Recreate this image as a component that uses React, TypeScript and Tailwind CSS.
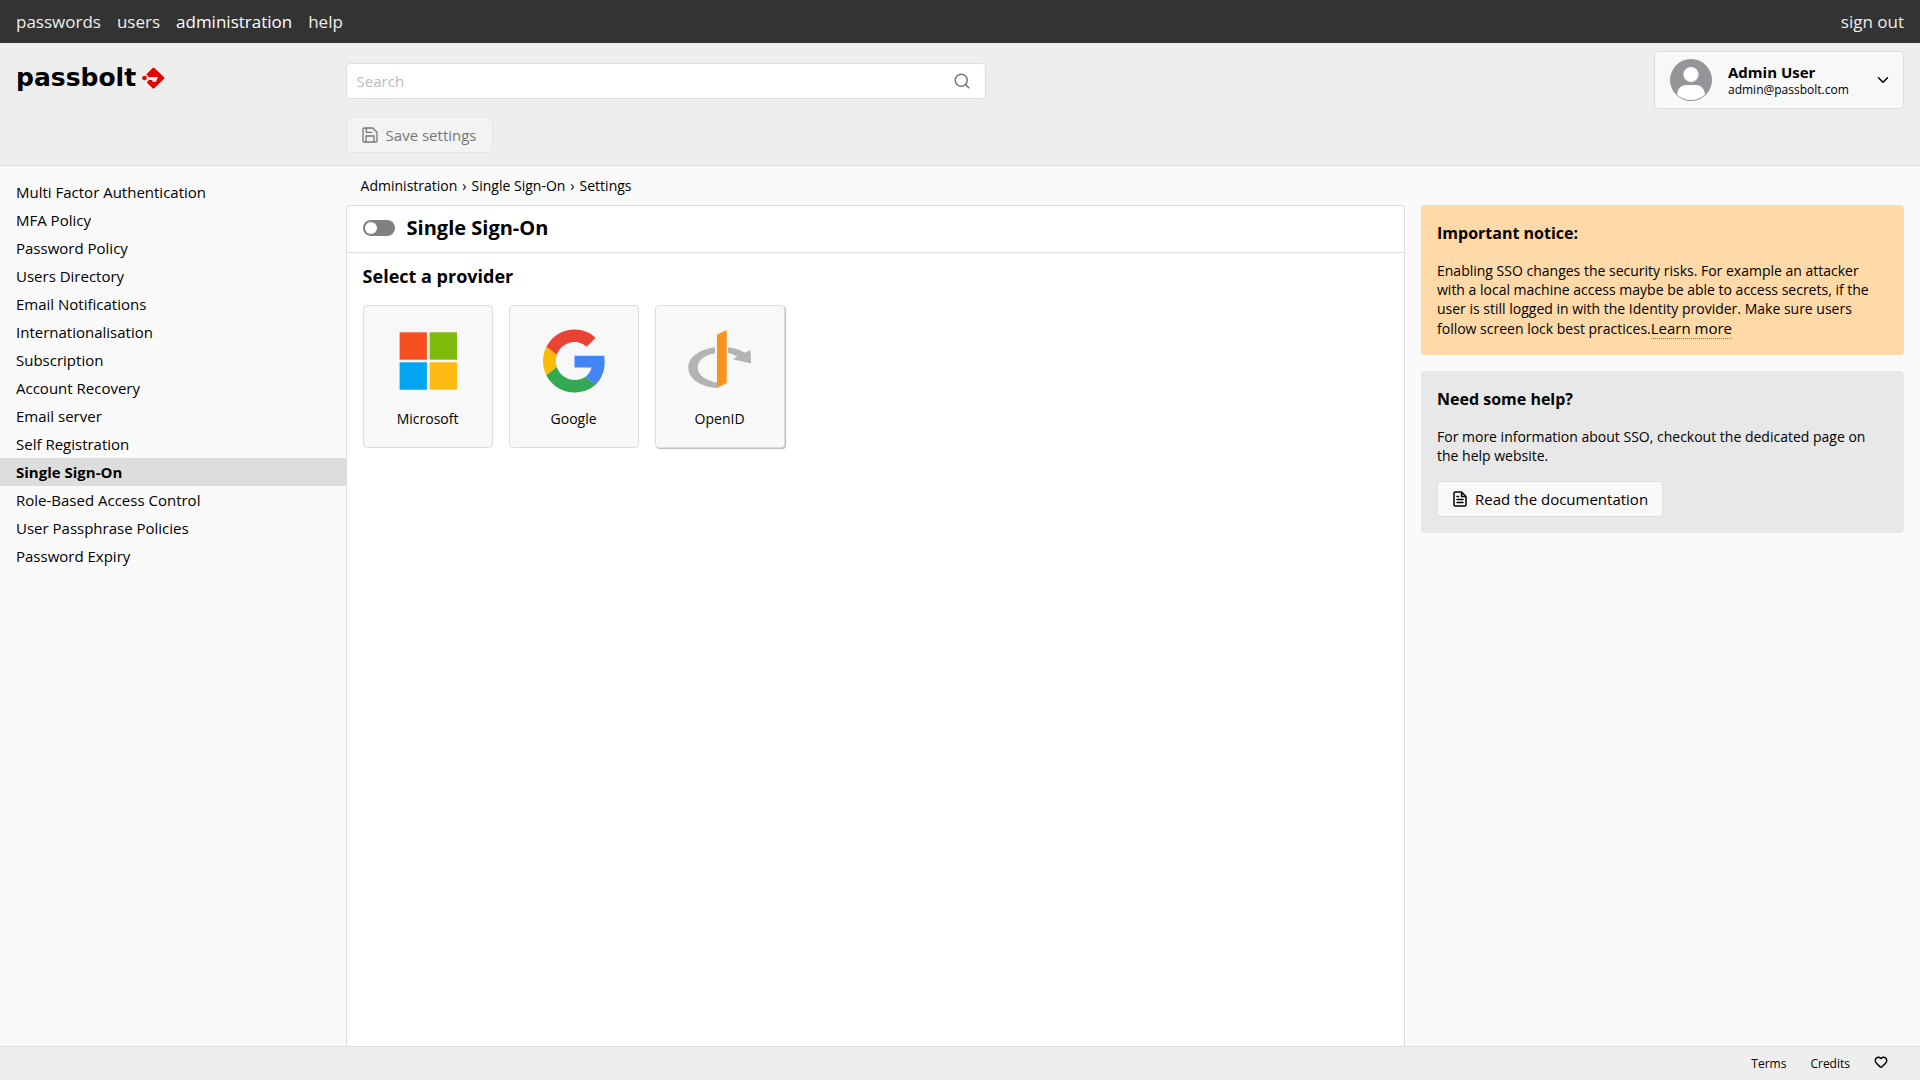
import type { ReactNode } from "react";
import { ChevronDown, Heart, Search } from "lucide-react";

interface Provider {
  name: string;
  logo: ReactNode;
  highlighted?: boolean;
}

const mainMenu = ["passwords", "users", "administration", "help"];

const settingsMenu = [
  "Multi Factor Authentication",
  "MFA Policy",
  "Password Policy",
  "Users Directory",
  "Email Notifications",
  "Internationalisation",
  "Subscription",
  "Account Recovery",
  "Email server",
  "Self Registration",
  "Single Sign-On",
  "Role-Based Access Control",
  "User Passphrase Policies",
  "Password Expiry",
];

const breadcrumbs = ["Administration", "Single Sign-On", "Settings"];

function MicrosoftLogo() {
  return (
    <svg viewBox="0 0 58 58" className="w-[58px] h-[58px]" aria-hidden="true">
      <path fill="#f65020" d="M.6.300h27.300v27.400H.6z" />
      <path fill="#80bb0c" d="M30.600.300H58v27.400H30.600z" />
      <path fill="#02a5f2" d="M.6 30.300h27.300v27.400H.6z" />
      <path fill="#ffb913" d="M30.600 30.300H58v27.400H30.600z" />
    </svg>
  );
}

function GoogleLogo() {
  return (
    <svg viewBox="0 0 48 48" className="w-16 h-16 pl-px" aria-hidden="true">
      <path fill="#EA4335" d="M24 9.5c3.54 0 6.71 1.22 9.21 3.6l6.85-6.85C35.9 2.38 30.47 0 24 0 14.62 0 6.51 5.38 2.56 13.22l7.98 6.19C12.43 13.72 17.74 9.5 24 9.5z" />
      <path fill="#4285F4" d="M46.98 24.55c0-1.57-.15-3.09-.38-4.55H24v9.02h12.94c-.58 2.96-2.26 5.48-4.78 7.18l7.73 6c4.51-4.18 7.09-10.36 7.09-17.65z" />
      <path fill="#FBBC05" d="M10.53 28.59c-.48-1.45-.76-2.99-.76-4.59s.27-3.14.76-4.59l-7.98-6.19C.92 16.46 0 20.12 0 24c0 3.88.92 7.54 2.56 10.78l7.97-6.19z" />
      <path fill="#34A853" d="M24 48c6.48 0 11.93-2.13 15.89-5.81l-7.73-6c-2.15 1.45-4.92 2.3-8.16 2.3-6.26 0-11.57-4.22-13.47-9.91l-7.98 6.19C6.51 42.62 14.62 48 24 48z" />
    </svg>
  );
}

function OpenIdLogo() {
  return (
    <svg viewBox="0 0 64 62" className="w-16 h-[62px]" aria-hidden="true">
      <path fill="#b3b3b3" d="M27 17.500C12 19 .3 27 .3 37.700.3 48.500 12.500 57 29 58v-5.600C18 50.800 9.700 45.500 9.700 37.500 9.700 30 17 24.700 27 23.300z" />
      <path fill="#b3b3b3" d="M40 17.300c6.500.7 12.300 2.600 17 5.500l5.400-2.800.7 13.400-18.500-4.100 4.800-2.600c-2.800-1.700-5.900-2.900-9.400-3.600z" />
      <path fill="#f8931e" d="M29 4.500 38.700 0v53L29 58z" />
    </svg>
  );
}

function PassboltMark() {
  return (
    <svg viewBox="0 0 23 22" className="w-[23px] h-[22px]" aria-hidden="true">
      <circle cx="2.500" cy="11" r="2.300" fill="#e10600" />
      <path
        fill="#e10600"
        d="M4.300 7.500 10.600 1q.9-.8 1.800 0l9.700 9.200q.7.800 0 1.600l-9.700 9.400q-.9.800-1.800 0L4.800 15.400l2-2.500h3.800l-.6 1.900h4l2.100-4.700H6.700z"
      />
    </svg>
  );
}

function SaveIcon() {
  return (
    <svg viewBox="0 0 16 16" className="w-4 h-4" fill="none" stroke="currentColor" strokeWidth="1.3" strokeLinejoin="round" aria-hidden="true">
      <path d="M2 1h8.700L15 5.300V14a1 1 0 0 1-1 1H2a1 1 0 0 1-1-1V2a1 1 0 0 1 1-1z" />
      <path d="M4.300 1v4.300h5.900M4 15V9h8v6" />
    </svg>
  );
}

function DocumentIcon() {
  return (
    <svg viewBox="0 0 16 16" className="w-4 h-4" fill="none" stroke="currentColor" strokeWidth="1.5" strokeLinejoin="round" strokeLinecap="round" aria-hidden="true">
      <path d="M9.500 1H3.300C2.500 1 2 1.500 2 2.300v11.400c0 .8.5 1.300 1.300 1.300h9.400c.8 0 1.300-.5 1.300-1.300V5.500zM9.500 1v4.500H14" />
      <path d="M5 5.500h1.500M5 8.500h6M5 11.500h6" />
    </svg>
  );
}

function Avatar() {
  return (
    <svg viewBox="0 0 42 42" className="w-[42px] h-[42px] shrink-0" aria-hidden="true">
      <circle cx="21" cy="21" r="21" fill="#939598" />
      <circle cx="21" cy="15.500" r="7.600" fill="#fff" />
      <path fill="#fff" d="M7 35.500C7.500 30 11 26 16 26h10c5 0 8.500 4 9 9.500C31.500 39 26.500 41 21 41S10.500 39 7 35.500z" />
    </svg>
  );
}

const providers: Provider[] = [
  { name: "Microsoft", logo: <MicrosoftLogo /> },
  { name: "Google", logo: <GoogleLogo /> },
  { name: "OpenID", logo: <OpenIdLogo />, highlighted: true },
];

function ProviderCard({ name, logo, highlighted }: Provider) {
  return (
    <button
      type="button"
      className={`flex flex-col items-center w-[130px] h-[143px] pt-5 rounded border border-[#ddd] bg-[#f8f8f8] ${
        highlighted ? "shadow-[1px_1px_1px_#bbb]" : ""
      }`}
    >
      <span className="flex items-center justify-center h-[70px]">{logo}</span>
      <span className="mt-[13px] text-sm leading-5">{name}</span>
    </button>
  );
}

export default function App() {
  return (
    <div className="flex flex-col min-h-screen bg-[#fafafa] text-black font-['Open_Sans',sans-serif]">
      {/* Top navigation */}
      <nav className="flex justify-between h-[43px] px-4 bg-[#333] text-[17px] leading-[43px] text-[#eee]">
        <div className="flex gap-4">
          {mainMenu.map((item) => (
            <a key={item} href="#" className={item === "administration" ? "text-white" : ""}>
              {item}
            </a>
          ))}
        </div>
        <a href="#">sign out</a>
      </nav>

      {/* Header */}
      <header className="flex h-[123px] border-b border-[#ddd] bg-[#eee]">
        <div className="w-[18%] pl-4 pt-5">
          <a href="#" className="flex items-center gap-1.5">
            <span className="text-[25px] leading-[30px] font-bold font-['DejaVu_Sans',sans-serif]">passbolt</span>
            <PassboltMark />
          </a>
        </div>
        <div className="flex-1 pt-5">
          <div className="flex items-center w-[640px] h-9 pr-[14px] rounded border border-[#ddd] bg-white">
            <input
              type="text"
              aria-label="Search"
              placeholder="Search"
              className="flex-1 h-full pl-[10px] text-[15px] outline-none placeholder:text-[#bbb]"
            />
            <button type="button" aria-label="Submit search" className="text-[#777]">
              <Search size={18} />
            </button>
          </div>
          <button
            type="button"
            disabled
            className="flex items-center gap-2 h-9 mt-[18px] px-[15px] rounded border border-[#e8e8e8] bg-[#f3f3f3] text-[15px] text-[#777]"
          >
            <SaveIcon />
            Save settings
          </button>
        </div>
        <div className="pr-4 pt-2">
          <button
            type="button"
            className="flex items-center w-[250px] h-[58px] pl-[15px] pr-[11px] rounded border border-[#ddd] bg-[#f8f8f8] text-left"
          >
            <Avatar />
            <span className="flex-1 pl-4">
              <span className="block text-[15px] leading-5 font-bold">Admin User</span>
              <span className="block text-xs leading-4">admin@passbolt.com</span>
            </span>
            <ChevronDown size={18} />
          </button>
        </div>
      </header>

      <div className="flex flex-1">
        {/* Settings menu */}
        <aside className="w-[18%] pt-3">
          <ul>
            {settingsMenu.map((item) => (
              <li key={item} className={item === "Single Sign-On" ? "bg-[#ddd] font-bold" : ""}>
                <a href="#" className="block pl-4 text-[15px] leading-7">
                  {item}
                </a>
              </li>
            ))}
          </ul>
        </aside>

        <main className="flex flex-col flex-1">
          <ol className="flex h-[39px] pl-[15px] text-sm leading-10">
            {breadcrumbs.map((crumb, i) => (
              <li key={crumb}>
                {i > 0 && <span className="px-[5px]">›</span>}
                <a href="#">{crumb}</a>
              </li>
            ))}
          </ol>
          <div className="flex-1 rounded-t border border-b-0 border-[#ddd] bg-white">
            <div className="flex items-center gap-3 h-[47px] px-4 pb-0.5 border-b border-[#ddd]">
              <input
                id="sso-toggle"
                type="checkbox"
                className="appearance-none w-8 h-4 rounded-full bg-[#808080] before:block before:w-3 before:h-3 before:m-0.5 before:rounded-full before:bg-white"
              />
              <label htmlFor="sso-toggle" className="text-xl font-bold">
                Single Sign-On
              </label>
            </div>
            <div className="px-4 pt-[11px]">
              <h4 className="text-lg leading-6 font-bold">Select a provider</h4>
              <div className="flex gap-4 mt-[17px]">
                {providers.map((provider) => (
                  <ProviderCard key={provider.name} {...provider} />
                ))}
              </div>
            </div>
          </div>
        </main>

        {/* Help panels */}
        <aside className="flex flex-col gap-4 w-[499px] pr-4 ml-4 mt-[39px]">
          <section className="p-4 rounded bg-[#ffd9a8]">
            <h3 className="text-base leading-6 font-bold">Important notice:</h3>
            <p className="mt-4 text-sm leading-[19px]">
              Enabling SSO changes the security risks. For example an attacker with a local machine access maybe be able
              to access secrets, if the user is still logged in with the Identity provider. Make sure users follow screen
              lock best practices.
              <a href="#" className="inline-block border-b border-dotted border-[#777] text-[15px] leading-5">
                Learn more
              </a>
            </p>
          </section>
          <section className="p-4 rounded bg-[#e8e8e8]">
            <h3 className="text-base leading-6 font-bold">Need some help?</h3>
            <p className="mt-4 text-sm leading-[19px]">
              For more information about SSO, checkout the dedicated page on the help website.
            </p>
            <a
              href="#"
              className="inline-flex items-center gap-[7px] h-9 mt-4 px-[14px] rounded border border-[#e0e0e0] bg-[#f8f8f8] text-[15px]"
            >
              <DocumentIcon />
              Read the documentation
            </a>
          </section>
        </aside>
      </div>

      <footer className="flex items-center justify-end gap-6 h-[34px] pr-8 border-t border-[#ddd] bg-[#eee] text-xs">
        <a href="#">Terms</a>
        <a href="#">Credits</a>
        <a href="#" aria-label="Credits and thanks" className="pb-1">
          <Heart size={14} strokeWidth={2.5} />
        </a>
      </footer>
    </div>
  );
}
